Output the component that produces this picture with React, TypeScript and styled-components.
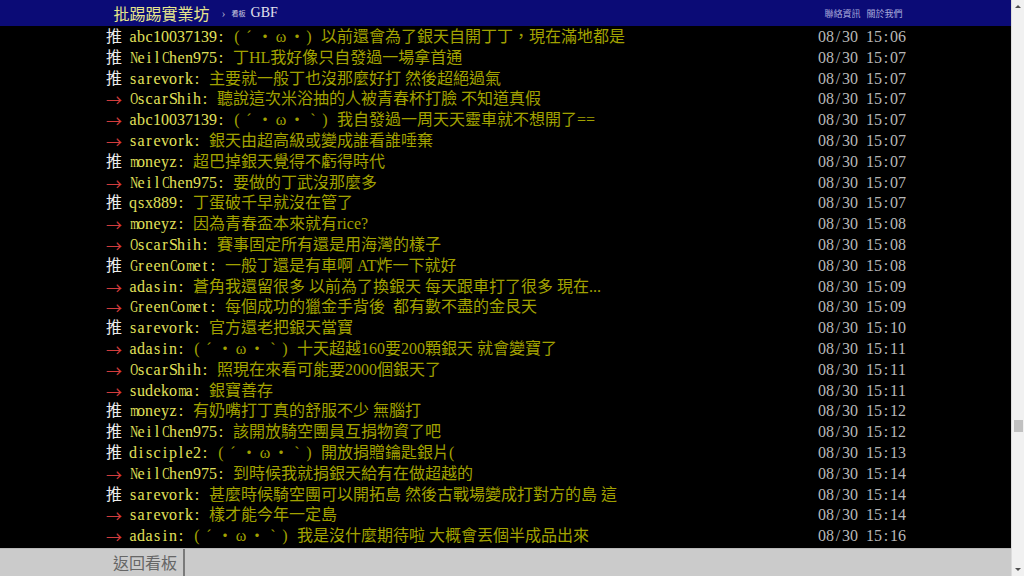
import styled, { createGlobalStyle } from 'styled-components'

const GlobalStyle = createGlobalStyle`
  html, body {
    margin: 0;
    padding: 0;
    height: 100%;
    background: #000;
    overflow: hidden;
  }
  #root {
    height: 100%;
  }
`

const SERIF = `'Liberation Serif', 'Noto Sans CJK TC', serif`
const CJK = `'Noto Sans CJK TC', sans-serif`

const Page = styled.div`
  display: flex;
  height: 100vh;
  width: 100vw;
`

const Main = styled.div`
  display: flex;
  flex-direction: column;
  flex: 1;
  min-width: 0;
`

const TopBar = styled.div`
  height: 26px;
  flex: none;
  background-color: #0b0b76;
`

const TopInner = styled.div`
  display: flex;
  align-items: center;
  width: 800px;
  height: 100%;
  margin: 0 auto;
  padding: 0 3px 0 8px;
  box-sizing: border-box;
  font-family: ${SERIF};
`

const Logo = styled.span`
  font-size: 16px;
  color: #e6e68c;
`

const Crumb = styled.span`
  margin: 0 6px 0 12px;
  font-size: 12px;
  color: #a8a8c8;
`

const BoardLabel = styled.span`
  font-size: 7px;
  color: #d0d0e0;
  margin-right: 5px;
`

const BoardName = styled.span`
  font-size: 14px;
  color: #e4e4ee;
`

const Links = styled.div`
  display: flex;
  gap: 6px;
  margin-left: auto;
`

const TopLink = styled.span`
  font-size: 9px;
  color: #a9a9dc;
  font-family: ${CJK};
`

const Screen = styled.div`
  flex: 1;
  overflow: hidden;
  background: #000;
  padding-top: 1px;
`

const Column = styled.div`
  width: 800px;
  margin: 0 auto;
  padding-left: 1px;
`

const Push = styled.div`
  display: flex;
  height: 20.8px;
  line-height: 20.8px;
  font-size: 16px;
  font-family: ${SERIF};
  white-space: pre;
`

const Tag = styled.span<{ kind: 'push' | 'arrow' }>`
  flex: none;
  width: 23px;
  color: ${({ kind }) => (kind === 'push' ? '#ececec' : '#d23c3c')};
  font-family: ${({ kind }) => (kind === 'push' ? SERIF : CJK)};
`

const User = styled.span`
  flex: none;
  color: #e2e25a;
`

const Content = styled.span`
  flex: 1;
  overflow: hidden;
  color: #a2a200;
`

const Cell = styled.span<{ wide: boolean; squeeze: boolean }>`
  display: inline-block;
  width: ${({ wide }) => (wide ? 16 : 8)}px;
  text-align: center;
  transform: ${({ squeeze }) => (squeeze ? 'scaleX(0.68)' : 'none')};
`

const Time = styled.span`
  flex: none;
  width: 88px;
  color: #b8b8b8;
`

const Footer = styled.div`
  display: flex;
  height: 28px;
  flex: none;
  background: #cbcbcb;
  border-top: 1px solid #b8b8b8;
  box-sizing: border-box;
`

const BackButton = styled.div`
  width: 185px;
  box-sizing: border-box;
  padding-right: 6px;
  text-align: right;
  line-height: 27px;
  font-size: 16px;
  color: #666;
  font-family: ${CJK};
  border-right: 2px solid #7a7a7a;
`

const ScrollTrack = styled.div`
  display: flex;
  flex-direction: column;
  align-items: center;
  width: 12px;
  flex: none;
  background: #f1f1f1;
  border-left: 1px solid #dcdcdc;
`

const Arrow = styled.div<{ dir: 'up' | 'down' }>`
  width: 0;
  height: 0;
  margin-top: ${({ dir }) => (dir === 'up' ? '5px' : 'auto')};
  margin-bottom: ${({ dir }) => (dir === 'down' ? '5px' : '0')};
  border-left: 3px solid transparent;
  border-right: 3px solid transparent;
  ${({ dir }) =>
    dir === 'up' ? 'border-bottom: 3px solid #505050;' : 'border-top: 3px solid #505050;'}
`

const Thumb = styled.div`
  width: 9px;
  height: 12px;
  margin-top: 412px;
  background: #c1c1c1;
`

type Row = {
  tag: 'push' | 'arrow'
  user: string
  face?: string
  text: string
  time: string
}

const rows: Row[] = [
  { tag: 'push', user: 'abc10037139', face: '(´・ω・)', text: '以前還會為了銀天自開丁丁，現在滿地都是', time: '08/30 15:06' },
  { tag: 'push', user: 'NeilChen975', text: '丁HL我好像只自發過一場拿首通', time: '08/30 15:07' },
  { tag: 'push', user: 'sarevork', text: '主要就一般丁也沒那麼好打 然後超絕過氣', time: '08/30 15:07' },
  { tag: 'arrow', user: 'OscarShih', text: '聽說這次米浴抽的人被青春杯打臉 不知道真假', time: '08/30 15:07' },
  { tag: 'arrow', user: 'abc10037139', face: '(´・ω・`)', text: '我自發過一周天天靈車就不想開了==', time: '08/30 15:07' },
  { tag: 'arrow', user: 'sarevork', text: '銀天由超高級或變成誰看誰唾棄', time: '08/30 15:07' },
  { tag: 'push', user: 'moneyz', text: '超巴掉銀天覺得不虧得時代', time: '08/30 15:07' },
  { tag: 'arrow', user: 'NeilChen975', text: '要做的丁武沒那麼多', time: '08/30 15:07' },
  { tag: 'push', user: 'qsx889', text: '丁蛋破千早就沒在管了', time: '08/30 15:07' },
  { tag: 'arrow', user: 'moneyz', text: '因為青春盃本來就有rice?', time: '08/30 15:08' },
  { tag: 'arrow', user: 'OscarShih', text: '賽事固定所有還是用海灣的樣子', time: '08/30 15:08' },
  { tag: 'push', user: 'GreenComet', text: '一般丁還是有車啊 AT炸一下就好', time: '08/30 15:08' },
  { tag: 'arrow', user: 'adasin', text: '蒼角我還留很多 以前為了換銀天 每天跟車打了很多 現在...', time: '08/30 15:09' },
  { tag: 'arrow', user: 'GreenComet', text: '每個成功的獵金手背後  都有數不盡的金艮天', time: '08/30 15:09' },
  { tag: 'push', user: 'sarevork', text: '官方還老把銀天當寶', time: '08/30 15:10' },
  { tag: 'arrow', user: 'adasin', face: '(´・ω・`)', text: '十天超越160要200顆銀天 就會變寶了', time: '08/30 15:11' },
  { tag: 'arrow', user: 'OscarShih', text: '照現在來看可能要2000個銀天了', time: '08/30 15:11' },
  { tag: 'arrow', user: 'sudekoma', text: '銀寶善存', time: '08/30 15:11' },
  { tag: 'push', user: 'moneyz', text: '有奶嘴打丁真的舒服不少 無腦打', time: '08/30 15:12' },
  { tag: 'push', user: 'NeilChen975', text: '該開放騎空團員互捐物資了吧', time: '08/30 15:12' },
  { tag: 'push', user: 'disciple2', face: '(´・ω・`)', text: '開放捐贈鑰匙銀片(', time: '08/30 15:13' },
  { tag: 'arrow', user: 'NeilChen975', text: '到時候我就捐銀天給有在做超越的', time: '08/30 15:14' },
  { tag: 'push', user: 'sarevork', text: '甚麼時候騎空團可以開拓島 然後古戰場變成打對方的島 這', time: '08/30 15:14' },
  { tag: 'arrow', user: 'sarevork', text: '樣才能今年一定島', time: '08/30 15:14' },
  { tag: 'arrow', user: 'adasin', face: '(´・ω・`)', text: '我是沒什麼期待啦 大概會丟個半成品出來', time: '08/30 15:16' },
]

const WIDE_LATIN = 'mMwWGCOHN'

// terminal-style text: half-width chars take 8px, the rest 16px
const isWide = (ch: string) => ch.charCodeAt(0) > 0x7f || ch === '`'

const Mono = ({ text }: { text: string }) => (
  <>
    {Array.from(text).map((ch, i) => (
      <Cell key={i} wide={isWide(ch)} squeeze={WIDE_LATIN.includes(ch)}>
        {ch === ' ' ? '\u00a0' : ch}
      </Cell>
    ))}
  </>
)

const App = () => {
  return (
    <>
      <GlobalStyle />
      <Page>
        <Main>
          <TopBar>
            <TopInner>
              <Logo>批踢踢實業坊</Logo>
              <Crumb>›</Crumb>
              <BoardLabel>看板</BoardLabel>
              <BoardName>GBF</BoardName>
              <Links>
                <TopLink>聯絡資訊</TopLink>
                <TopLink>關於我們</TopLink>
              </Links>
            </TopInner>
          </TopBar>
          <Screen>
            <Column>
              {rows.map((r, i) => (
                <Push key={i}>
                  <Tag kind={r.tag}>{r.tag === 'push' ? '推' : '→'}</Tag>
                  <User>
                    <Mono text={`${r.user}: `} />
                  </User>
                  <Content>
                    {r.face && <Mono text={`${r.face} `} />}
                    {r.text}
                  </Content>
                  <Time>
                    <Mono text={r.time} />
                  </Time>
                </Push>
              ))}
            </Column>
          </Screen>
          <Footer>
            <BackButton>返回看板</BackButton>
          </Footer>
        </Main>
        <ScrollTrack>
          <Arrow dir="up" />
          <Thumb />
          <Arrow dir="down" />
        </ScrollTrack>
      </Page>
    </>
  )
}

export default App
